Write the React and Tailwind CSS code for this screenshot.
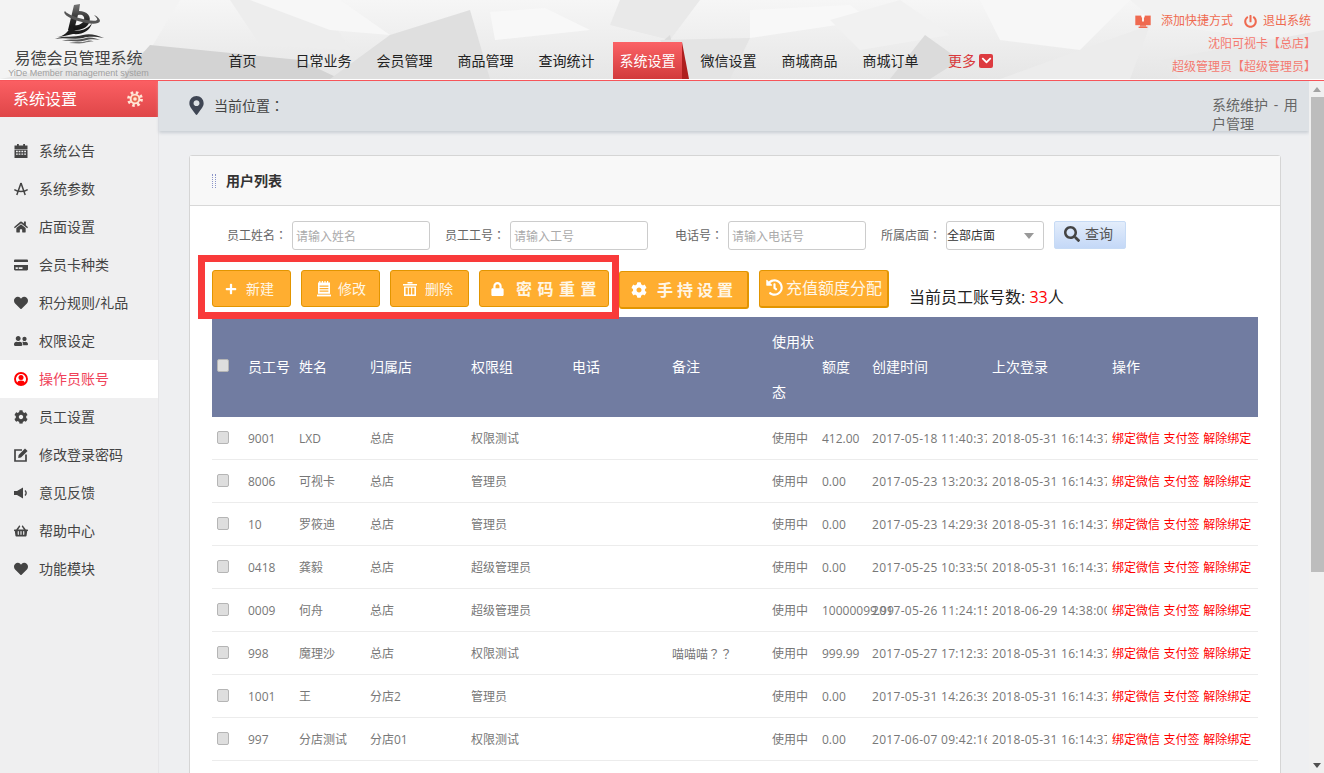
import React from 'react';
import { FaHome, FaCreditCard, FaHeart, FaUserFriends, FaCog, FaMapMarkerAlt, FaPlus, FaLock, FaChevronDown, FaPowerOff, FaSearch, FaHistory, FaShoppingBasket } from 'react-icons/fa';

const FONT = "font-['Open_Sans','Noto_Sans_CJK_SC',sans-serif]";
const TC = "font-['Noto_Sans_CJK_TC',sans-serif]";

function P({ children }) {
  return <span className={TC}>{children}</span>;
}

function Calendar({ className }) {
  return (
    <svg viewBox="0 0 14 14" className={className} fill="currentColor">
      <rect x="0.5" y="1.5" width="13" height="3.5" />
      <rect x="3" y="0" width="1.8" height="2" />
      <rect x="9.2" y="0" width="1.8" height="2" />
      <path d="M0.5 5.6h13V14H0.5z M2 6.8v1.4h1.8V6.8z M4.6 6.8v1.4h1.8V6.8z M7.4 6.8v1.4h1.8V6.8z M10.2 6.8v1.4H12V6.8z M2 9.4v1.4h1.8V9.4z M4.6 9.4v1.4h1.8V9.4z M7.4 9.4v1.4h1.8V9.4z M10.2 9.4v1.4H12V9.4z" fillRule="evenodd" />
    </svg>
  );
}

function Compass({ className }) {
  return (
    <svg viewBox="0 0 14 14" className={className} fill="none" stroke="currentColor" strokeWidth="1.5">
      <path d="M7 1 L2.8 13 M7 1 L11.2 13" />
      <path d="M0.3 7.5 C3.5 10 10.5 10 13.7 7.5" />
    </svg>
  );
}

function UserRing({ className }) {
  return (
    <svg viewBox="0 0 14 14" className={className}>
      <circle cx="7" cy="7" r="6" fill="none" stroke="currentColor" strokeWidth="1.9" />
      <circle cx="7" cy="5.6" r="2.5" fill="currentColor" />
      <path d="M3 11.6 C3.4 9.2 5 8.6 7 8.6 C9 8.6 10.6 9.2 11 11.6 L9 13 H5z" fill="currentColor" />
    </svg>
  );
}

function EditSquare({ className }) {
  return (
    <svg viewBox="0 0 14 14" className={className}>
      <path d="M8 2 H1 V13 H12 V6.5" fill="none" stroke="currentColor" strokeWidth="1.7" />
      <path d="M11 0.5 L13.6 3 L7 9.6 L4.2 10 L4.6 7z" fill="currentColor" />
    </svg>
  );
}

function Speaker({ className }) {
  return (
    <svg viewBox="0 0 14 14" className={className}>
      <path d="M0 5 H3 L9 1.5 V12.5 L3 9 H0z" fill="currentColor" />
      <path d="M11 4.5 C12.4 6 12.4 8 11 9.5" fill="none" stroke="currentColor" strokeWidth="1.3" />
    </svg>
  );
}

function NoteIcon({ className }) {
  return (
    <svg viewBox="0 0 14 16" className={className} fill="currentColor">
      <path fillRule="evenodd" d="M1 1.5h1.2V0h1.2v1.5h1.4V0H6v1.5h1.4V0h1.2v1.5H10V0h1.2v1.5H13v11.2H1z M2.6 4.5v1.2h8.8V4.5z M2.6 7v1.2h8.8V7z M2.6 9.5v1.2h8.8V9.5z" />
      <rect x="0" y="13.6" width="14" height="1.8" />
    </svg>
  );
}

function TrashIcon({ className }) {
  return (
    <svg viewBox="0 0 14 14" className={className} fill="currentColor">
      <rect x="0" y="2" width="14" height="1.5" />
      <rect x="4.5" y="0" width="5" height="1.5" />
      <path fillRule="evenodd" d="M1 4.5h12V14H1z M2.6 5.8V12.6h2.2V5.8z M5.9 5.8V12.6h2.2V5.8z M9.2 5.8V12.6h2.2V5.8z" />
    </svg>
  );
}

function ScreenIcon({ className }) {
  return (
    <svg viewBox="0 0 16 14" className={className}>
      <rect x="0.3" y="1.6" width="15.4" height="9.6" fill="currentColor" />
      <rect x="6.2" y="0" width="3.6" height="2.2" fill="#f5f5f5" />
      <path d="M8 0.6 L10.2 3.2 H8.9 V7.4 H7.1 V3.2 H5.8z" fill="#fff" />
      <rect x="5" y="11.2" width="6" height="1.4" fill="currentColor" />
      <rect x="3.6" y="12.6" width="8.8" height="1.4" fill="currentColor" />
    </svg>
  );
}

function GearRing({ className }) {
  return (
    <svg viewBox="0 0 16 16" className={className}>
      <circle cx="8" cy="8" r="6.4" fill="none" stroke="#ffe6d6" strokeWidth="3" strokeDasharray="2.5 2.53" />
      <circle cx="8" cy="8" r="5.3" fill="#ffe6d6" />
      <circle cx="8" cy="8" r="3.4" fill="#ec6a50" />
      <circle cx="8" cy="8" r="1.8" fill="#ffe6d6" />
    </svg>
  );
}

function Logo() {
  return (
    <svg viewBox="0 0 50 40" className="w-[50px] h-[40px]">
      <defs>
        <linearGradient id="lg" x1="0" y1="0" x2="0" y2="1">
          <stop offset="0" stopColor="#777" />
          <stop offset="0.6" stopColor="#2a2a2a" />
          <stop offset="1" stopColor="#111" />
        </linearGradient>
      </defs>
      <path d="M20 1 L26 0 L25 7 C33 7 38 12 35 19 C33 24 26 27 17 26 L18 21 C24 22 29 20 30 16 C31 12 28 10 24 11 L20 26 L14 26 Z" fill="url(#lg)" />
      <path d="M11 7 C8 9 14 14 24 17 C34 20 45 21 46 17 C46 15 43 12 40 11 C42 13 44 15 43 16 C41 18 32 16 25 14 C18 12 12 9 11 7Z" fill="#555" />
      <path d="M2 33 C10 33 15 27 18 20 L20 26 C26 28 34 25 38 19 C36 27 28 31 19 30 C13 31 8 33 2 33Z" fill="#1b1b1b" />
      <path d="M1 35 C10 31 20 34 29 31 C36 29 42 31 50 34 C42 33 36 32 29 34 C20 36 10 33 1 35Z" fill="#333" />
      <path d="M7 37 C16 34 24 37 32 34 C37 33 41 34 46 36 C40 35 36 35 31 36.5 C23 39 15 36 7 37Z" fill="#555" />
      <path d="M15 39 C21 37 27 39 33 37 C36 36 38 37 40 37.5 C36 37.5 33 38 30 39 C25 40 20 39 15 39Z" fill="#777" />
    </svg>
  );
}

function HeaderBg() {
  return (
    <svg viewBox="0 0 1324 79" preserveAspectRatio="none" className="absolute inset-0 w-full h-[79px]">
      <defs>
        <linearGradient id="hb" x1="0" y1="0" x2="0" y2="1">
          <stop offset="0" stopColor="#f6f6f6" />
          <stop offset="1" stopColor="#e6e6e6" />
        </linearGradient>
      </defs>
      <rect width="1324" height="79" fill="url(#hb)" />
      <polygon points="0,0 180,0 150,50 0,79" fill="#f3f3f3" />
      <polygon points="150,45 300,60 340,79 120,79" fill="#d3d3d3" />
      <polygon points="230,0 320,0 350,50 260,45" fill="#ededed" />
      <polygon points="250,0 340,0 390,35 330,30" fill="#f7f7f7" />
      <polygon points="390,35 470,10 490,79 330,79" fill="#dfdfdf" />
      <polygon points="490,12 545,8 590,30 495,40" fill="#f8f8f8" />
      <polygon points="620,0 700,0 670,40 610,25" fill="#e9e9e9" />
      <polygon points="670,35 680,79 620,79" fill="#dcdcdc" />
      <polygon points="750,10 850,5 870,20 750,38" fill="#f8f8f8" />
      <polygon points="660,40 750,38 730,79 690,79" fill="#e4e4e4" />
      <polygon points="830,20 900,0 950,35 860,50" fill="#f1f1f1" />
      <polygon points="925,35 960,60 930,79 890,79" fill="#dbdbdb" />
      <polygon points="980,0 1130,0 1080,50 1000,40" fill="#f7f7f7" />
      <polygon points="1080,50 1150,25 1130,79 1000,79" fill="#ececec" />
      <polygon points="1130,0 1324,0 1324,45 1160,25" fill="#f2f2f2" />
      <polygon points="1160,60 1324,30 1324,79 1180,79" fill="#e9e9e9" />
    </svg>
  );
}

const navItems = ['首页', '日常业务', '会员管理', '商品管理', '查询统计', '系统设置', '微信设置', '商城商品', '商城订单'];

const sideItems = [
  [Calendar, '系统公告'],
  [Compass, '系统参数'],
  [FaHome, '店面设置'],
  [FaCreditCard, '会员卡种类'],
  [FaHeart, '积分规则/礼品'],
  [FaUserFriends, '权限设定'],
  [UserRing, '操作员账号', true],
  [FaCog, '员工设置'],
  [EditSquare, '修改登录密码'],
  [Speaker, '意见反馈'],
  [FaShoppingBasket, '帮助中心'],
  [FaHeart, '功能模块'],
];

const rows = [
  ['9001', 'LXD', '总店', '权限测试', '', '412.00', '2017-05-18 11:40:37', '2018-05-31 16:14:37'],
  ['8006', '可视卡', '总店', '管理员', '', '0.00', '2017-05-23 13:20:32', '2018-05-31 16:14:37'],
  ['10', '罗筱迪', '总店', '管理员', '', '0.00', '2017-05-23 14:29:38', '2018-05-31 16:14:37'],
  ['0418', '龚毅', '总店', '超级管理员', '', '0.00', '2017-05-25 10:33:50', '2018-05-31 16:14:37'],
  ['0009', '何舟', '总店', '超级管理员', '', '10000099.99', '2017-05-26 11:24:15', '2018-06-29 14:38:00'],
  ['998', '魔理沙', '总店', '权限测试', '喵喵喵？？', '999.99', '2017-05-27 17:12:33', '2018-05-31 16:14:37'],
  ['1001', '王', '分店2', '管理员', '', '0.00', '2017-05-31 14:26:39', '2018-05-31 16:14:37'],
  ['997', '分店测试', '分店01', '权限测试', '', '0.00', '2017-06-07 09:42:16', '2018-05-31 16:14:37'],
];

function Check({ className }) {
  return <input type="checkbox" className={"appearance-none block w-[12px] h-[13px] rounded-[2px] border border-[#b5b5b5] bg-[#dedede] " + className} />;
}

function Btn({ className, children }) {
  return (
    <button className={"flex items-center justify-center rounded-[3px] bg-[#ffae30] border border-[#e29500] text-[#fff6e6] " + className}>
      {children}
    </button>
  );
}

function Field({ label, placeholder, labelClass }) {
  return (
    <div className="flex items-center">
      <span className={"text-xs text-[#666] " + labelClass}>{label}<P>：</P></span>
      <input placeholder={placeholder} className="h-[29px] w-[138px] border border-[#ccc] rounded-[3px] bg-white pl-[3px] pt-[2px] text-xs placeholder:text-[#aaa]" />
    </div>
  );
}

const thClass = "pl-[5px] text-left font-normal text-sm leading-[50px] text-white align-middle";
const tdClass = "pl-[5px] pt-[2px] text-xs text-[#777] whitespace-nowrap border-b border-[#ececec] h-[43px] align-middle";

export default function App() {
  return (
    <div className={"h-[773px] w-[1324px] overflow-hidden flex flex-col bg-[#eeeff1] " + FONT}>
      <header className="relative h-[81px] shrink-0 border-b border-[#f6555a] bg-white">
        <HeaderBg />
        <div className="relative flex h-[79px]">
          <div className="w-[157px] shrink-0 flex flex-col items-center pt-[4px]">
            <Logo />
            <div className="text-base leading-[20px] text-[#444] mt-[4px]">易德会员管理系统</div>
            <div className="text-[9px] leading-[11px] text-[#a0a0a0] font-['Liberation_Sans',sans-serif] whitespace-nowrap">YiDe Member management system</div>
          </div>
          <nav className="ml-[45px] self-end h-[37px] flex">
            {navItems.map((n) => (
              <div key={n} className="w-[81px] flex justify-center">
                {n === '系统设置' ? (
                  <div className="relative w-[69px] h-[37px] text-sm leading-[37px] text-center text-white bg-gradient-to-b from-[#fb6266] to-[#d23a3c]">
                    {n}
                    <svg viewBox="0 0 7 37" className="absolute left-[69px] top-0 w-[7px] h-[37px]"><polygon points="0,0 7,37 0,37" fill="#ae1f1f" /></svg>
                  </div>
                ) : (
                  <span className="text-sm leading-[37px] text-[#222]">{n}</span>
                )}
              </div>
            ))}
            <div className="w-[81px] flex items-center pl-[17px]">
              <span className="text-sm text-[#d9393c]">更多</span>
              <span className="ml-[3px] w-[14px] h-[14px] rounded-[2px] bg-[#dd3b40] flex items-center justify-center text-white"><FaChevronDown className="w-[11px] h-[11px]" /></span>
            </div>
          </nav>
          <div className="ml-auto pr-[13px] pt-[10px] flex flex-col items-end text-xs leading-[22px] text-[#f47a70]">
            <div className="flex items-center text-[#ef6a50]">
              <ScreenIcon className="w-[16px] h-[14px] mr-[10px]" />
              <span>添加快捷方式</span>
              <FaPowerOff className="w-[13px] h-[13px] ml-[11px] mr-[6px]" />
              <span>退出系统</span>
            </div>
            <div className="-mr-[5px]">沈阳可视卡<P>【</P>总店<P>】</P></div>
            <div className="-mr-[5px]">超级管理员<P>【</P>超级管理员<P>】</P></div>
          </div>
        </div>
      </header>

      <div className="flex flex-1 min-h-0">
        <aside className="w-[159px] shrink-0 bg-[#efeff0] border-r border-[#e6e6e8]">
          <div className="h-[36px] flex items-center justify-between pl-[13px] pr-[15px] bg-gradient-to-b from-[#fb5f63] to-[#df4648] text-white text-base">
            <span>系统设置</span>
            <GearRing className="w-[16px] h-[16px]" />
          </div>
          <ul className="mt-[15px]">
            {sideItems.map(([Icon, label, active]) => (
              <li key={label} className={"h-[38px] flex items-center text-sm pl-[14px] " + (active ? "bg-white text-[#f0435a]" : "text-[#444]")}>
                <span className={"w-[25px] shrink-0 " + (active ? "text-[#f00]" : "text-[#444]")}>
                  <Icon className="w-[14px] h-[14px]" />
                </span>
                {label}
              </li>
            ))}
          </ul>
        </aside>

        <main className="flex-1 min-w-0">
          <div className="h-[50px] bg-[#dde1e5] shadow-[0_2px_3px_#c9ced4] flex items-start">
            <FaMapMarkerAlt className="w-[17px] h-[19px] text-[#3f4654] ml-[29px] mt-[15px]" />
            <span className="ml-[9px] mt-[14px] text-sm leading-[20px] text-[#444]">当前位置<P>：</P></span>
            <div className="ml-auto mr-[7px] w-[90px] mt-[14px] text-sm leading-[19px] text-[#666] [word-spacing:2px]">系统维护 - 用户管理</div>
          </div>

          <section className="relative mt-[24px] ml-[30px] mr-[28px] h-[700px] bg-white border border-[#d5d5d5] rounded-[3px]">
            <div className="h-[50px] bg-[#f8f8f8] border-b border-[#d8d8d8] flex items-center pl-[22px]">
              <span className="w-[4px] h-[14px] border-x border-dotted border-[#8a94c8]" />
              <span className="ml-[10px] pt-[1px] text-sm font-bold text-[#333]">用户列表</span>
            </div>

            <div className="flex items-center h-[29px] mt-[15px] ml-[37px]">
              <Field label="员工姓名" placeholder="请输入姓名" labelClass="w-[65px]" />
              <Field label="员工工号" placeholder="请输入工号" labelClass="w-[65px] ml-[15px]" />
              <Field label="电话号" placeholder="请输入电话号" labelClass="w-[53px] ml-[27px]" />
              <span className="text-xs text-[#666] ml-[15px] w-[65px]">所属店面<P>：</P></span>
              <div className="h-[29px] w-[98px] border border-[#ccc] rounded-[3px] bg-white flex items-center justify-between text-xs text-[#333] pr-[9px] pt-[1px]">
                全部店面
                <svg viewBox="0 0 10 6" className="w-[10px] h-[6px]"><polygon points="0,0 10,0 5,6" fill="#999" /></svg>
              </div>
              <button className="ml-[10px] w-[72px] h-[28px] -mt-[1px] pb-[2px] pr-[3px] rounded-[2px] border border-[#c7dbf5] bg-gradient-to-b from-[#e3edfb] to-[#c4d8f7] flex items-center justify-center text-sm text-[#555]">
                <FaSearch className="w-[16px] h-[16px] text-[#444] mr-[5px]" />
                查询
              </button>
            </div>

            <div className="flex items-start gap-[10px] mt-[20px] ml-[22px] h-[38px] text-sm">
              <Btn className="w-[79px] h-[37px] pr-[4px]"><FaPlus className="w-[12px] h-[12px] text-white mr-[9px]" />新建</Btn>
              <Btn className="w-[79px] h-[37px] pl-[2px]"><NoteIcon className="w-[14px] h-[16px] text-white mr-[7px]" />修改</Btn>
              <Btn className="w-[79px] h-[37px] pr-[3px]"><TrashIcon className="w-[14px] h-[14px] text-white mr-[8px]" />删除</Btn>
              <Btn className="w-[130px] h-[37px] font-bold text-base tracking-[5.5px] pl-[5px]"><FaLock className="w-[13px] h-[14px] text-white mr-[12px]" />密码重置</Btn>
              <Btn className="w-[130px] h-[38px] mt-[1px] border-r-2 border-b-2 font-bold text-base tracking-[4px] pl-[1px]"><FaCog className="w-[16px] h-[16px] text-white mr-[10px]" />手持设置</Btn>
              <Btn className="w-[130px] h-[38px] border-r-2 border-b-2 text-base pb-[2px] pl-[1px]"><FaHistory className="w-[17px] h-[17px] text-white mr-[3px]" />充值额度分配</Btn>
              <div className="ml-[10px] mt-[17px] text-base leading-[20px] text-[#222]">当前员工账号数: <span className="text-[#f00]">33</span>人</div>
            </div>

            <div className="absolute left-[8px] top-[99px] w-[421px] h-[64px] border-[7px] border-[#f93a3a]" />

            <div className="ml-[22px] mt-[9px] w-[1046px]">
              <table className="table-fixed w-[1046px] border-separate border-spacing-0">
                <colgroup>
                  <col className="w-[31px]" /><col className="w-[51px]" /><col className="w-[71px]" /><col className="w-[101px]" />
                  <col className="w-[101px]" /><col className="w-[100px]" /><col className="w-[100px]" /><col className="w-[50px]" />
                  <col className="w-[50px]" /><col className="w-[120px]" /><col className="w-[120px]" /><col className="w-[151px]" />
                </colgroup>
                <thead className="bg-[#717ca1]">
                  <tr className="h-[100px]">
                    <th className={thClass}><Check className="-mt-[3px]" /></th>
                    <th className={thClass}>员工号</th>
                    <th className={thClass}>姓名</th>
                    <th className={thClass}>归属店</th>
                    <th className={thClass}>权限组</th>
                    <th className={thClass}>电话</th>
                    <th className={thClass}>备注</th>
                    <th className={thClass}>使用状态</th>
                    <th className={thClass}>额度</th>
                    <th className={thClass}>创建时间</th>
                    <th className={thClass}>上次登录</th>
                    <th className={thClass}>操作</th>
                  </tr>
                </thead>
                <tbody>
                  {rows.map((r) => (
                    <tr key={r[0]}>
                      <td className={tdClass}><Check className="-mt-[3px]" /></td>
                      <td className={tdClass}>{r[0]}</td>
                      <td className={tdClass}>{r[1]}</td>
                      <td className={tdClass}>{r[2]}</td>
                      <td className={tdClass}>{r[3]}</td>
                      <td className={tdClass}></td>
                      <td className={tdClass}>{r[4].replace(/？/g, '')}{r[4] && <P>？？</P>}</td>
                      <td className={tdClass}>使用中</td>
                      <td className={tdClass}>{r[5]}</td>
                      <td className={tdClass + " overflow-hidden tracking-[0.3px]"}>{r[6]}</td>
                      <td className={tdClass + " overflow-hidden tracking-[0.3px]"}>{r[7]}</td>
                      <td className={tdClass + " text-[#f00] [word-spacing:0.5px]"}>绑定微信 支付签 解除绑定</td>
                    </tr>
                  ))}
                </tbody>
              </table>
            </div>
          </section>
        </main>

        <div className="w-[15px] shrink-0 bg-[#f0f0f0] flex flex-col items-end">
          <div className="w-full h-[16px] flex items-center justify-center">
            <svg viewBox="0 0 8 5" className="w-[8px] h-[5px]"><polygon points="4,0 8,5 0,5" fill="#a3a3a3" /></svg>
          </div>
          <div className="w-[13px] h-[475px] bg-[#bdbdbd]" />
          <div className="mt-auto w-full h-[16px] flex items-center justify-center">
            <svg viewBox="0 0 8 5" className="w-[8px] h-[5px]"><polygon points="0,0 8,0 4,5" fill="#505050" /></svg>
          </div>
        </div>
      </div>
    </div>
  );
}
